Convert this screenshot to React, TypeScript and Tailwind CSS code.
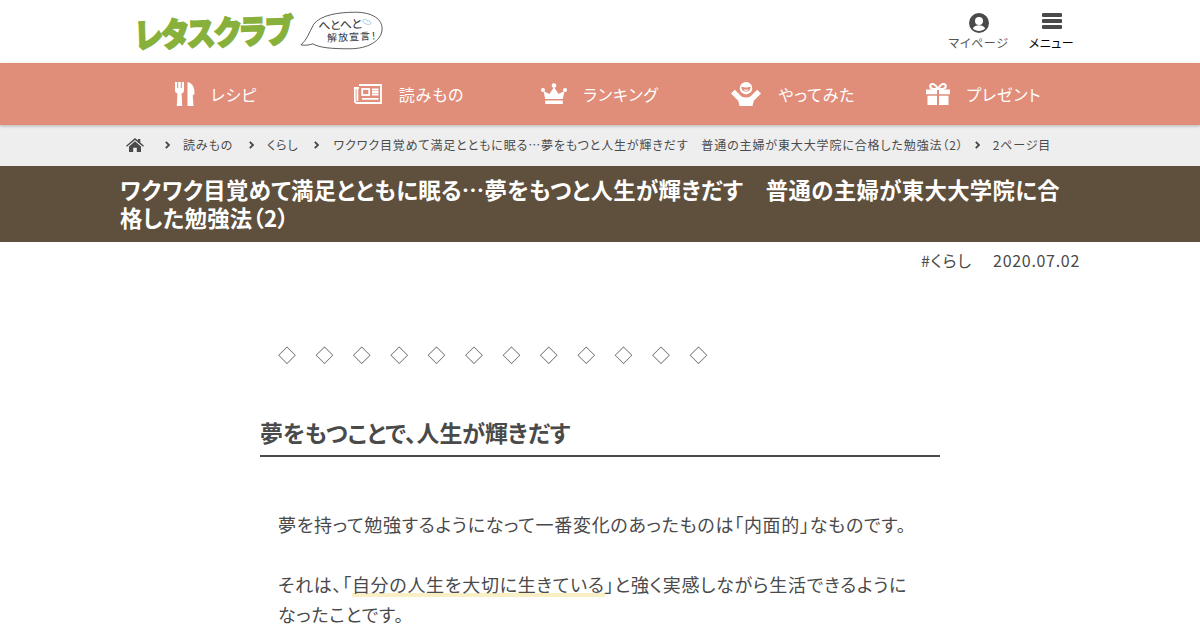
const jp = `font-['Noto_Sans_CJK_JP','Noto_Sans',sans-serif] [font-feature-settings:'palt']`

function ForkIcon() {
  return (
    <svg width="20" height="24" viewBox="0 0 20 24" fill="#fff">
      <path d="M0 0h2.200v6h1V0h2.600v6h1V0H9v8.500c0 1.500-1 2.500-2.400 3L7.200 24H1.800l.6-12.500C1 11 0 10 0 8.500z" />
      <path d="M12.500 0C17 1 19.500 5 19.500 10.500c0 1.800-.6 2.500-1.800 2.700L18.500 24h-6z" />
    </svg>
  )
}

function NewsIcon() {
  return (
    <svg width="28" height="20" viewBox="0 0 28 20" fill="none" stroke="#fff" strokeWidth="1.800">
      <path d="M5 1h22v18H3c-1.200 0-2.200-1-2.200-2.200V4H5" />
      <path d="M3.400 5v12" />
      <rect x="8.200" y="5" width="7" height="6" strokeWidth="1.800" />
      <path d="M18 5.500h6.500M18 8h6.500M18 10.500h6.500M8 14.800h16.500" strokeWidth="1.800" />
    </svg>
  )
}

function CrownIcon() {
  return (
    <svg width="26" height="22" viewBox="0 0 26 22" fill="#fff">
      <circle cx="13" cy="2.500" r="2.300" />
      <circle cx="2" cy="7" r="2" />
      <circle cx="24" cy="7" r="2" />
      <path d="M13 4l4.500 7L23.500 8 21.800 16H4.200L2.500 8l6 3z" />
      <rect x="4.200" y="17.500" width="17.600" height="3.500" />
    </svg>
  )
}

function CheerIcon() {
  return (
    <svg width="30" height="24" viewBox="0 0 30 24" fill="#fff">
      <path d="M0 11.500L3.800 7.800l6.700 6.700c3 1.400 6 1.400 9 0l6.700-6.700L30 11.500l-7.200 7.300L21.500 24h-13l-1.300-5.200z" />
      <circle cx="15" cy="6.200" r="6.200" />
      <path d="M10.500 4.500c2.500 1.300 6.500 1.300 9 0 .4 3-1.600 5.200-4.500 5.200s-4.900-2.200-4.500-5.200z" fill="#e08e79" />
      <path d="M12.500 7.300c1.500.5 3.500.5 5 0-.4 1.100-1.300 1.600-2.500 1.600s-2.100-.5-2.500-1.600z" />
    </svg>
  )
}

function GiftIcon() {
  return (
    <svg width="24" height="22" viewBox="0 0 24 22" fill="#fff">
      <path d="M0 6.500h11v4.800H0zM13 6.500h11v4.800H13zM1.500 12.800H11V22H1.500zM13 12.800h9.500V22H13z" />
      <path d="M12 6C10 2.500 8 1 6.500 1 5.200 1 4.300 2 4.300 3.200 4.300 5 5.800 6 8 6zM12 6c2-3.500 4-5 5.500-5 1.300 0 2.200 1 2.200 2.200C19.700 5 18.200 6 16 6z" fill="none" stroke="#fff" strokeWidth="2" />
    </svg>
  )
}

function Chevron() {
  return (
    <svg width="5" height="8" viewBox="0 0 5 8" fill="none" stroke="#444" strokeWidth="1.800" className="shrink-0">
      <path d="M.8.8L4 4 .8 7.200" />
    </svg>
  )
}

function HomeIcon() {
  return (
    <svg width="18" height="14" viewBox="0 0 18 14" fill="#4a4a4a" className="shrink-0">
      <path d="M9 0l3 2.600V1h2.300v3.600L18 7.800l-.9 1L9 1.900.9 8.800 0 7.800z" />
      <path d="M9 3.300l6 5.200V14h-4.200V9.800H7.200V14H3V8.500z" />
    </svg>
  )
}

const navItems = [
  { icon: <ForkIcon />, label: 'レシピ', cls: 'gap-4' },
  { icon: <NewsIcon />, label: '読みもの', cls: 'gap-[17px] pl-[2px]' },
  { icon: <CrownIcon />, label: 'ランキング', cls: 'gap-4' },
  { icon: <CheerIcon />, label: 'やってみた', cls: 'gap-[18px] pl-[2px]' },
  { icon: <GiftIcon />, label: 'プレゼント', cls: 'gap-4' },
]

export default function App() {
  return (
    <div className={`h-[630px] w-[1200px] overflow-hidden bg-white text-[#4a4a4a] ${jp}`}>
      <header className="mx-auto flex h-[63px] w-[960px] items-start">
        <div className="ml-[15px] mt-[11px] flex items-start">
          <div className="flex h-[44px] w-[158px] origin-left -rotate-2 scale-y-[1.15] items-center whitespace-nowrap text-[29px] font-black leading-none tracking-[-0.5px] text-[#88b13c] [-webkit-text-stroke:1.5px_#88b13c]">
            レタスクラブ
          </div>
          <div className="relative -mt-[0px] ml-[7px] h-[40px] w-[85px]">
            <svg width="85" height="40" viewBox="0 0 86 40" fill="none" stroke="#333" strokeWidth="0.800" className="absolute inset-0">
              <path d="M1 34C7 29 9 22 14 13 21 4 38 1 56 1c17 0 28 7 27 18-1 11-14 19-33 19-18 0-30-1-37-5-3 1-8 2-12 1z" fill="#fff" />
              <path d="M63 10c2-3 5-2 5 0 3-1 5 2 3 3-2 1-6 0-8-3z" stroke="#8fc3dc" />
            </svg>
            <div className="relative -rotate-3 pl-[18px] pt-[6px] text-xs leading-[14px] text-[#333]">へとへと</div>
            <div className="relative -rotate-3 pl-[27px] text-[10px] leading-[12px] tracking-[1px] text-[#333]">解放宣言！</div>
          </div>
        </div>
        <div className="ml-auto mr-[6px] mt-[13px] flex gap-5">
          <div className="flex w-[61px] flex-col items-center">
            <svg width="20" height="20" viewBox="0 0 20 20" className="mb-[1px]">
              <circle cx="10" cy="10" r="10" fill="#4a4a4a" />
              <circle cx="10" cy="8" r="4" fill="#fff" />
              <path d="M3.800 15.500c1.200-2.500 3.400-3.300 6.200-3.300s5 .8 6.200 3.300c-3 3.200-9.400 3.200-12.400 0z" fill="#fff" />
            </svg>
            <span className="whitespace-nowrap text-xs leading-[18px] tracking-[0.65px] text-[#555]">マイページ</span>
          </div>
          <div className="flex w-[45px] flex-col items-center">
            <div className="mb-[5px] flex h-4 flex-col justify-between">
              <div className="h-1 w-5 rounded-[1px] bg-[#4a4a4a]" />
              <div className="h-1 w-5 rounded-[1px] bg-[#4a4a4a]" />
              <div className="h-1 w-5 rounded-[1px] bg-[#4a4a4a]" />
            </div>
            <span className="whitespace-nowrap text-xs leading-[18px] tracking-[0.5px] text-black">メニュー</span>
          </div>
        </div>
      </header>

      <nav className="relative z-10 h-[62px] bg-[#e08e79] shadow-[0_1px_3px_rgba(0,0,0,0.25)]">
        <div className="mx-auto grid h-full w-[960px] grid-cols-5">
          {navItems.map((item) => (
            <div key={item.label} className={`flex items-center justify-center ${item.cls}`}>
              {item.icon}
              <span className="-mt-[1px] text-base tracking-[0.85px] text-white">{item.label}</span>
            </div>
          ))}
        </div>
      </nav>

      <div className="h-[41px] bg-[#eeeeee]">
        <div className="mx-auto flex h-full w-[960px] -translate-y-[1px] items-center whitespace-nowrap text-xs tracking-[0.87px] text-[#4a4a4a]">
          <div className="ml-[6px]"><HomeIcon /></div>
          <div className="ml-[21px]"><Chevron /></div>
          <span className="ml-[13px]">読みもの</span>
          <div className="ml-[16px]"><Chevron /></div>
          <span className="ml-[13px]">くらし</span>
          <div className="ml-[15px]"><Chevron /></div>
          <span className="ml-[15px]">ワクワク目覚めて満足とともに眠る…夢をもつと人生が輝きだす　普通の主婦が東大大学院に合格した勉強法（2）</span>
          <div className="ml-[11px]"><Chevron /></div>
          <span className="ml-[13px]">2ページ目</span>
        </div>
      </div>

      <div className="h-[76px] bg-[#5f4f3d]">
        <h1 className="mx-auto w-[960px] pt-[9px] text-[22.400px] font-bold leading-[28px] tracking-[0.32px] text-white">
          ワクワク目覚めて満足とともに眠る…夢をもつと人生が輝きだす　普通の主婦が東大大学院に合格した勉強法（2）
        </h1>
      </div>

      <div className="mx-auto flex w-[960px] justify-end gap-[21px] pt-[6px] text-base leading-6 tracking-[0.8px]">
        <span className="tracking-[0.95px]">#くらし</span>
        <span className="tracking-[0.7px]">2020.07.02</span>
      </div>

      <main className="mx-auto w-[680px]">
        <p className="mt-[67px] whitespace-nowrap pl-[18px] text-lg leading-[30px] tracking-[19.400px] text-[#666] will-change-transform">◇◇◇◇◇◇◇◇◇◇◇◇</p>
        <h2 className="mt-[46px] border-b-2 border-[#4a4a4a] pb-[6px] text-[22.900px] font-bold leading-[34px]">夢をもつことで、人生が輝きだす</h2>
        <div className="pl-[18px] pr-[18px] pt-[52px] text-lg leading-[30px] tracking-[0.72px]">
          <p>夢を持って勉強するようになって一番変化のあったものは「内面的」なものです。</p>
          <p className="mt-[30px]">
            それは、「<span className="bg-[linear-gradient(transparent_85%,#f8efc4_85%)]">自分の人生を大切に生きている</span>」と強く実感しながら生活できるようになったことです。
          </p>
        </div>
      </main>
    </div>
  )
}
